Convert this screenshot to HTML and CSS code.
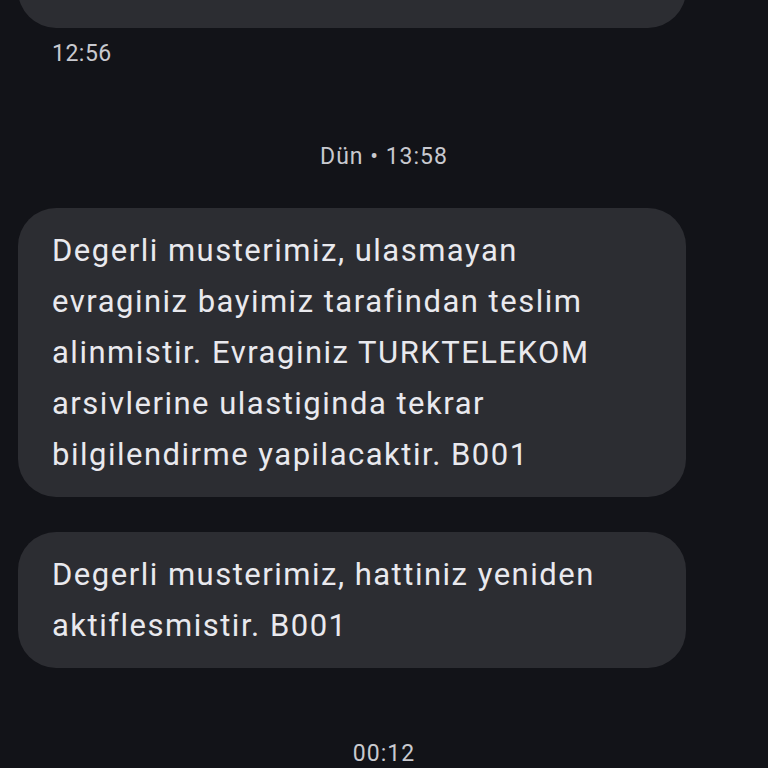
FILE: index.html
```html
<!DOCTYPE html>
<html>
<head>
  <title>Mesajlar</title>
  <link rel="stylesheet" href="styles.css">
</head>
<body>
  <div id="thread">
    <div class="row">
      <div class="bubble bubble-cut"></div>
      <p class="time">12:56</p>
    </div>

    <p class="day">Dün • 13:58</p>

    <div class="row">
      <div class="bubble">Degerli musterimiz, ulasmayan evraginiz bayimiz tarafindan teslim alinmistir. Evraginiz TURKTELEKOM arsivlerine ulastiginda tekrar bilgilendirme yapilacaktir. B001</div>
      <div class="bubble bubble-next">Degerli musterimiz, hattiniz yeniden aktiflesmistir. B001</div>
    </div>

    <p class="day day-last">00:12</p>
  </div>
</body>
</html>
```

FILE: styles.css
```css
body {
  margin: 0;
  background-color: #121318;
  font-family: Roboto, "Liberation Sans", sans-serif;
  overflow: hidden;
}

.row {
  padding: 0 82px 0 18px;
}

.bubble {
  background-color: #2c2d32;
  color: #e9e9ee;
  border-radius: 38px;
  padding: 17px 34px;
  font-size: 31px;
  line-height: 51px;
  letter-spacing: 1.5px;
  margin-top: 35px;
}

.bubble-cut {
  height: 60px;
  margin-top: -66px;
}

.bubble-next {
  margin-top: 35px;
}

.time {
  margin: 10px 0 0 34px;
  font-size: 23px;
  line-height: 32px;
  letter-spacing: 0.5px;
  color: #c8c9cf;
}

.day {
  margin: 71px 0 0 0;
  text-align: center;
  font-size: 23px;
  line-height: 32px;
  letter-spacing: 1px;
  color: #c8c9cf;
}

.day-last {
  margin-top: 70px;
}
```
